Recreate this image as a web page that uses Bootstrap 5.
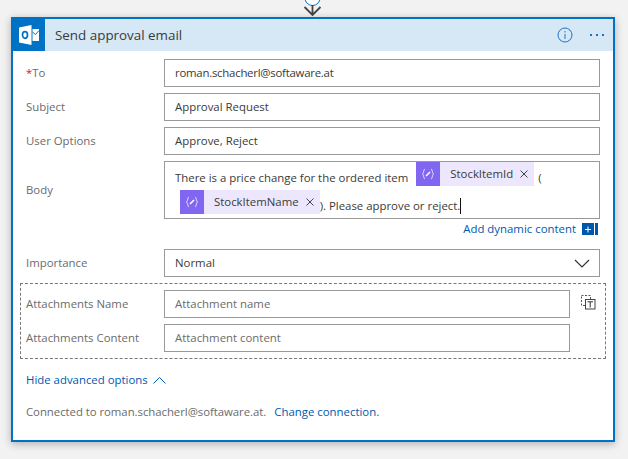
<!DOCTYPE html>
<html lang="en">
<head>
<meta charset="UTF-8">
<title>Send approval email</title>
<link rel="stylesheet" href="https://cdn.jsdelivr.net/npm/bootstrap@5.3.0/dist/css/bootstrap.min.css">
<style>
  html, body { height: 100%; }
  body { background: #f2f2f2; font-family: "Open Sans", "Liberation Sans", sans-serif; font-size: 11.4px; color: #3a3a3a; overflow: hidden; }
  .flow-arrow { height: 17px; margin-left: 303px; display: block; }
  .step-card { width: 604px; height: 425px; margin-left: 11px; border: 2px solid #0072c6; border-radius: 0; background: #fff; box-shadow: 0 2px 8px rgba(0,0,0,.28); }
  .step-head { height: 32px; background: #d6e8f5; font-size: 13.4px; color: #3a3a3a; }
  .step-logo { width: 32px; height: 32px; background: #0072c6; }
  .step-title { margin-left: 10px; }
  .step-tools { margin-right: 9px; gap: 17px; }
  .step-body { padding: 8px 13px 0 13px; }
  .field-row { display: flex; align-items: center; margin-bottom: 6px; }
  .field-label { width: 138px; color: #6b6b6b; flex: none; }
  .req { color: #e81123; }
  .field-box { flex: 1; height: 28px; border: 1px solid #999; padding: 0 10px; display: flex; align-items: center; color: #3a3a3a; }
  .field-box.ph { color: #6b6b6b; }
  .tight-text { letter-spacing: -.24px; }
  .conn-text { letter-spacing: -.05px; }
  .body-box { flex: 1; height: 58px; border: 1px solid #999; padding: 0 10px; }
  .body-line { height: 24px; display: flex; align-items: center; white-space: pre; }
  .body-line.second { margin-top: 4px; margin-left: 5px; }
  .plain-run { padding-top: 8px; line-height: 16px; }
  .token { display: inline-flex; align-items: center; height: 24px; background: #ece7fd; color: #3a3a3a; white-space: nowrap; }
  .token-icon { width: 24px; height: 24px; background: #8066f0; display: flex; align-items: center; justify-content: center; margin-right: 10px; }
  .token-x { margin: 0 6px 0 7px; display: block; }
  .caret-bar { display: inline-block; width: 1px; height: 16px; background: #111; }
  .dyn-row { display: flex; justify-content: flex-end; align-items: center; height: 16px; margin-top: -4px; margin-bottom: 12px; padding-right: 2px; gap: 6px; color: #0058ad; }
  .dyn-plus { width: 16px; height: 12px; background: #0058ad; position: relative; }
  .dyn-plus::after { content: ""; position: absolute; right: 3px; top: 0; width: 1px; height: 12px; background: #fff; }
  .dyn-plus svg { display: block; }
  .select-box { justify-content: space-between; padding-right: 9px; }
  .attach-box { margin: 0 -6px; border: 1px dashed #777; padding: 6px 0 0 5px; height: 76px; }
  .attach-box .field-row { margin-right: 35px; position: relative; }
  .attach-del { position: absolute; right: -26px; top: 5px; }
  .adv-link { color: #0058ad; margin-top: 13px; gap: 5px; height: 16px; }
  .conn-row { color: #6b6b6b; margin-top: 16px; height: 16px; }
  .conn-row a { color: #0058ad; text-decoration: none; margin-left: 8px; }
</style>
</head>
<body>
<svg class="flow-arrow" width="20" height="17" viewBox="0 0 20 17" fill="none">
  <circle cx="9.500" cy="-2" r="7.500" stroke="#0072c6" fill="#fff"/>
  <path d="M1.500 7 L9.500 15 L17.500 7 M9.500 5 V15" stroke="#444" stroke-width="1.800"/>
</svg>

<div class="card step-card">
  <div class="step-head d-flex align-items-center">
    <div class="step-logo d-flex align-items-center justify-content-center">
      <svg width="20" height="20" viewBox="0 0 20 20">
        <path d="M0 2.500 L12.500 0 V20 L0 17.500 Z" fill="#fff"/>
        <ellipse cx="6" cy="10" rx="2.500" ry="3.300" fill="none" stroke="#0072c6" stroke-width="1.700"/>
        <path d="M13.500 4 H20 V16 H13.500 Z" fill="#fff"/>
        <path d="M13.500 7 L16.500 9.500 L20 5.500" fill="none" stroke="#0072c6"/>
      </svg>
    </div>
    <div class="step-title flex-grow-1">Send approval email</div>
    <div class="step-tools d-flex align-items-center">
      <svg width="16" height="16" viewBox="0 0 16 16" fill="none">
        <circle cx="8" cy="8" r="7" stroke="#1f72c0"/>
        <path d="M8 7 V12 M8 4 V5.500" stroke="#1f72c0"/>
      </svg>
      <svg width="14" height="4" viewBox="0 0 14 4" fill="#1f72c0">
        <rect x="0" y="1" width="2" height="2"/><rect x="6" y="1" width="2" height="2"/><rect x="12" y="1" width="2" height="2"/>
      </svg>
    </div>
  </div>

  <div class="step-body">
    <div class="field-row">
      <div class="field-label"><span class="req">*</span>To</div>
      <div class="field-box"><span class="tight-text">roman.schacherl@softaware.at</span></div>
    </div>
    <div class="field-row">
      <div class="field-label">Subject</div>
      <div class="field-box">Approval Request</div>
    </div>
    <div class="field-row">
      <div class="field-label">User Options</div>
      <div class="field-box">Approve, Reject</div>
    </div>
    <div class="field-row">
      <div class="field-label">Body</div>
      <div class="body-box">
        <div class="body-line"><span class="plain-run">There is a price change for the ordered item</span><span class="token ms-2"><span class="token-icon"><svg width="14" height="12" viewBox="0 0 14 12" fill="none" stroke="#e4dcff" stroke-width="1"><path d="M4 1 C2.500 1 3 5 1.500 6 C3 7 2.500 11 4 11 M10 1 C11.500 1 11 5 12.500 6 C11 7 11.500 11 10 11"/><path d="M5 8 L9 4" stroke="#fff" stroke-width="1.600"/></svg></span>StockItemId<svg class="token-x" width="8" height="8" viewBox="0 0 8 8" stroke="#444"><path d="M.5 .5 L7.500 7.500 M7.500 .5 L.5 7.500"/></svg></span><span class="plain-run ms-1">(</span></div>
        <div class="body-line second"><span class="token"><span class="token-icon"><svg width="14" height="12" viewBox="0 0 14 12" fill="none" stroke="#e4dcff" stroke-width="1"><path d="M4 1 C2.500 1 3 5 1.500 6 C3 7 2.500 11 4 11 M10 1 C11.500 1 11 5 12.500 6 C11 7 11.500 11 10 11"/><path d="M5 8 L9 4" stroke="#fff" stroke-width="1.600"/></svg></span>StockItemName<svg class="token-x" width="8" height="8" viewBox="0 0 8 8" stroke="#444"><path d="M.5 .5 L7.500 7.500 M7.500 .5 L.5 7.500"/></svg></span><span class="plain-run">). Please approve or reject.</span><span class="caret-bar mt-2"></span></div>
      </div>
    </div>
    <div class="dyn-row">
      <span>Add dynamic content</span>
      <span class="dyn-plus"><svg width="12" height="12" viewBox="0 0 12 12" stroke="#fff"><path d="M3 6.500 H9 M6 3.500 V9.500"/></svg></span>
    </div>
    <div class="field-row">
      <div class="field-label">Importance</div>
      <div class="field-box select-box">Normal
        <svg width="16" height="9" viewBox="0 0 16 9" fill="none" stroke="#333" stroke-width="1.200"><path d="M1 1 L8 8 L15 1"/></svg>
      </div>
    </div>
    <div class="attach-box">
      <div class="field-row">
        <div class="field-label">Attachments Name</div>
        <div class="field-box ph">Attachment name</div>
        <svg class="attach-del" width="15" height="15" viewBox="0 0 15 15" fill="none">
          <rect x="0.500" y="0.500" width="9" height="10" stroke="#555" stroke-dasharray="2 1.500"/>
          <rect x="4.500" y="4.500" width="9.500" height="9.500" fill="#fff" stroke="#444"/>
          <path d="M6.500 6.800 H12 M9.200 6.800 V12.500" stroke="#333"/>
        </svg>
      </div>
      <div class="field-row">
        <div class="field-label">Attachments Content</div>
        <div class="field-box ph">Attachment content</div>
      </div>
    </div>
    <div class="adv-link d-flex align-items-center">
      <span>Hide advanced options</span>
      <svg width="13" height="7" viewBox="0 0 13 7" fill="none" stroke="#0058ad"><path d="M.5 6.500 L6.500 .5 L12.500 6.500"/></svg>
    </div>
    <div class="conn-row d-flex align-items-center"><span class="conn-text">Connected to roman.schacherl@softaware.at.</span><a href="#">Change connection.</a></div>
  </div>
</div>
</body>
</html>
